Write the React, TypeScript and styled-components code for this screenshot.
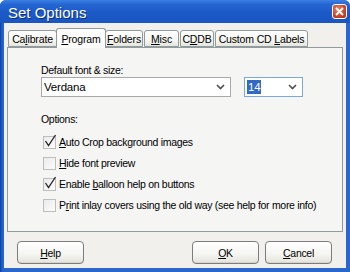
import React from "react";
import styled, { createGlobalStyle } from "styled-components";

const Global = createGlobalStyle`
  html, body { margin: 0; padding: 0; background: #fff; }
  body { font-family: "Liberation Sans", Arial, sans-serif; }
`;

const UI_FONT = `"Liberation Sans", Arial, sans-serif`;

const Window = styled.div`
  width: 350px;
  height: 272px;
  box-sizing: border-box;
  display: flex;
  flex-direction: column;
  background: linear-gradient(90deg, #0a3f9e, #1f5fcc 2px, #2a66cc 4px);
  border-radius: 6px 6px 0 0;
  overflow: hidden;
  font-family: ${UI_FONT};
  font-size: 10.5px;
  letter-spacing: -0.3px;
  color: #000;
`;

const TitleBar = styled.div`
  height: 23px;
  flex: none;
  display: flex;
  align-items: center;
  justify-content: space-between;
  padding: 0 3px 0 8px;
  background: linear-gradient(#3b80e2 0%, #2465d2 20%, #1c5ac8 55%, #1a55c0 100%);
`;

const Title = styled.div`
  color: #fff;
  font-family: "Liberation Sans", Arial, sans-serif;
  font-size: 15px;
  letter-spacing: 0;
  text-shadow: 1px 1px 0 #0a2f7a;
  margin-top: 1px;
`;

const CloseBtn = styled.div`
  width: 15px;
  height: 15px;
  box-sizing: border-box;
  border: 1px solid #fff;
  border-radius: 3px;
  background: radial-gradient(circle at 40% 35%, #e88a6a, #c8452a 60%, #a8321a);
  display: flex;
  align-items: center;
  justify-content: center;
`;

const Body = styled.div`
  flex: 1;
  margin: 0 4px 4px 4px;
  background: #f1f0ec;
  display: flex;
  flex-direction: column;
  padding: 4px 3px 0 3px;
`;

const TabStrip = styled.div`
  display: flex;
  align-items: flex-end;
  height: 20px;
  padding-left: 1px;
  position: relative;
  z-index: 1;
`;

const Tab = styled.div<{ $w: number; $active?: boolean }>`
  width: ${(p) => p.$w}px;
  height: ${(p) => (p.$active ? 20 : 17)}px;
  box-sizing: border-box;
  flex: none;
  margin-right: ${(p) => (p.$active ? -1 : 1)}px;
  margin-left: ${(p) => (p.$active ? -2 : 0)}px;
  border: 1px solid #919b9c;
  border-bottom: ${(p) => (p.$active ? "none" : "1px solid #919b9c")};
  border-radius: 3px 3px 0 0;
  background: ${(p) =>
    p.$active ? "#fcfcfc" : "linear-gradient(#ffffff, #f3f3ef 70%, #e6e6e0)"};
  display: flex;
  align-items: center;
  justify-content: center;
  padding-top: ${(p) => (p.$active ? 0 : 1)}px;
  white-space: pre;
  letter-spacing: -0.15px;
  margin-bottom: ${(p) => (p.$active ? -1 : 0)}px;
`;

const Panel = styled.div`
  height: 185px;
  box-sizing: border-box;
  border: 1px solid #919b9c;
  background: #f5f5f4;
  padding: 15px 0 0 33px;
  display: flex;
  flex-direction: column;
`;

const Label = styled.div`
  height: 14px;
  line-height: 14px;
`;

const ComboRow = styled.div`
  display: flex;
  gap: 13px;
`;

const Combo = styled.div<{ $w: number; $focus?: boolean }>`
  width: ${(p) => p.$w}px;
  height: 20px;
  box-sizing: border-box;
  border: 1px solid ${(p) => (p.$focus ? "#7aa7e0" : "#a9a9a9")};
  background: #fff;
  display: flex;
  align-items: center;
  justify-content: space-between;
  padding: 0 5px 0 2px;
  font-size: 11.5px;
  letter-spacing: -0.2px;
`;

const Selected = styled.span`
  background: #3169c6;
  color: #fff;
  padding: 0 1px;
  line-height: 14px;
`;

const OptionsLabel = styled(Label)`
  margin-top: 15px;
`;

const CheckRow = styled.div<{ $first?: boolean }>`
  display: flex;
  align-items: center;
  gap: 3px;
  height: 13px;
  margin-top: ${(p) => (p.$first ? 10 : 8)}px;
  margin-left: 2px;
`;

const Box = styled.div`
  width: 13px;
  height: 13px;
  flex: none;
  box-sizing: border-box;
  border: 1px solid #bdbdbd;
  background: linear-gradient(135deg, #ebebeb, #fbfbfb);
  position: relative;
`;

const CheckText = styled.span`
  line-height: 13px;
  white-space: nowrap;
`;

const ButtonRow = styled.div`
  display: flex;
  align-items: center;
  padding: 9px 0 0 10px;
`;

const Button = styled.div<{ $gap?: number }>`
  width: 67px;
  height: 23px;
  flex: none;
  box-sizing: border-box;
  border: 1px solid #7d7d7d;
  border-radius: 4px;
  background: linear-gradient(#ffffff, #f4f4f0 60%, #e4e3dc);
  box-shadow: inset 0 -1px 0 #d6d5cd;
  display: flex;
  align-items: center;
  justify-content: center;
  margin-left: ${(p) => p.$gap ?? 0}px;
`;

const U = styled.span`
  text-decoration: underline;
  text-underline-offset: 1px;
`;

const Chevron = () => (
  <svg width="9" height="6" viewBox="0 0 9 6">
    <path d="M1 1 L4.5 4.5 L8 1" stroke="#4d4d4d" strokeWidth="1.6" fill="none" />
  </svg>
);

const Tick = () => (
  <svg width="14" height="14" viewBox="0 0 14 14" style={{ position: "absolute", left: 0, top: -3 }}>
    <path d="M1.5 7 L4.5 11.5 L11.5 1" stroke="#222" strokeWidth="1.3" fill="none" />
  </svg>
);

const Check = ({ checked, children, first }: { checked?: boolean; children: React.ReactNode; first?: boolean }) => (
  <CheckRow $first={first}>
    <Box>{checked && <Tick />}</Box>
    <CheckText>{children}</CheckText>
  </CheckRow>
);

export default function App() {
  return (
    <>
      <Global />
      <Window>
        <TitleBar>
          <Title>Set Options</Title>
          <CloseBtn>
            <svg width="9" height="9" viewBox="0 0 9 9">
              <path d="M1 1 L8 8 M8 1 L1 8" stroke="#fff" strokeWidth="1.8" />
            </svg>
          </CloseBtn>
        </TitleBar>
        <Body>
          <TabStrip>
            <Tab $w={49}>Ca<U>l</U>ibrate</Tab>
            <Tab $w={50} $active><U>P</U>rogram</Tab>
            <Tab $w={38}><U>F</U>olders</Tab>
            <Tab $w={35}><U>M</U>isc</Tab>
            <Tab $w={34}>C<U>D</U>DB</Tab>
            <Tab $w={93}>{"Custom CD "}<U>L</U>abels</Tab>
          </TabStrip>
          <Panel>
            <Label>Default font &amp; size:</Label>
            <ComboRow>
              <Combo $w={190}>
                <span>Verdana</span>
                <Chevron />
              </Combo>
              <Combo $w={59} $focus>
                <Selected>14</Selected>
                <Chevron />
              </Combo>
            </ComboRow>
            <OptionsLabel>Options:</OptionsLabel>
            <Check checked first><U>A</U>uto Crop background images</Check>
            <Check><U>H</U>ide font preview</Check>
            <Check checked>Enable <U>b</U>alloon help on buttons</Check>
            <Check>P<U>r</U>int inlay covers using the old way (see help for more info)</Check>
          </Panel>
          <ButtonRow>
            <Button><U>H</U>elp</Button>
            <Button $gap={108}><U>O</U>K</Button>
            <Button $gap={6}><U>C</U>ancel</Button>
          </ButtonRow>
        </Body>
      </Window>
    </>
  );
}
